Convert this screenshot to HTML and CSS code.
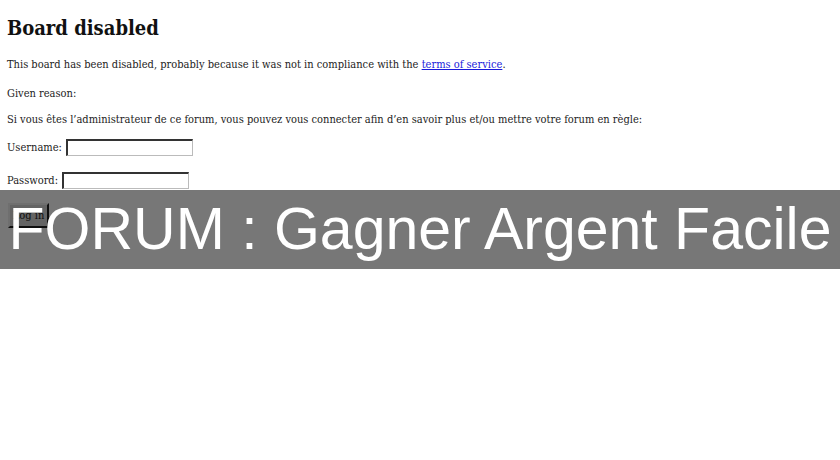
FILE: index.html
```html
<!DOCTYPE html>
<html>
<head>
<meta charset="utf-8">
<link rel="stylesheet" href="styles.css">
</head>
<body>
<div class="page">
  <h1 class="title">Board disabled</h1>
  <p class="line l1">This board has been disabled, probably because it was not in compliance with the <a href="#" class="link">terms of service</a>.</p>
  <p class="line l2">Given reason: </p>
  <p class="line l3">Si vous êtes l’administrateur de ce forum, vous pouvez vous connecter afin d’en savoir plus et/ou mettre votre forum en règle:</p>
  <form class="login">
    <div class="field f1"><span class="label">Username:</span><input type="text" class="input"></div>
    <div class="field f2"><span class="label">Password:</span><input type="password" class="input"></div>
    <div class="field"><button type="button" class="btn">Log in</button></div>
  </form>
</div>
<div class="overlay">FORUM : Gagner Argent Facile</div>
</body>
</html>
```
FILE: styles.css
```css
html, body { margin: 0; padding: 0; background: #fff; }
body { width: 840px; height: 460px; overflow: hidden; position: relative; }
.page { padding: 16px 7px 0; font-family: "DejaVu Serif", serif; font-stretch: condensed; color: #222; }
.title { font-size: 20px; line-height: 24px; margin: 0 0 18px; font-weight: bold; color: #111; }
.line { font-size: 11px; line-height: 13px; margin: 0; }
.l1 { margin-bottom: 16px; }
.l2 { margin-bottom: 13px; }
.l3 { margin-bottom: 13px; }
.link { color: #1a1adb; }
.field { display: flex; align-items: center; font-size: 11px; }
.f1 { margin-bottom: 16px; }
.f2 { margin-bottom: 14px; }
.label { margin-right: 4px; }
.input { box-sizing: border-box; width: 127px; height: 17px; margin: 0; border: 1px solid #bbb; border-top: 2px solid #333; border-left: 2px solid #333; padding: 1px; }
.btn { box-sizing: border-box; width: 41px; height: 25px; margin-left: 1px; font-family: "DejaVu Serif", serif; font-stretch: condensed; font-size: 11px; color: #222; background: #d6d6d6; border: 2px solid; border-color: #eee #222 #222 #eee; padding: 0; }
.overlay { position: absolute; left: 0; top: 190px; width: 840px; height: 79px; background: rgba(0,0,0,0.533); color: #fff; font-family: "Liberation Sans", Arial, sans-serif; font-size: 59px; line-height: 79px; text-align: center; white-space: nowrap; }
```
